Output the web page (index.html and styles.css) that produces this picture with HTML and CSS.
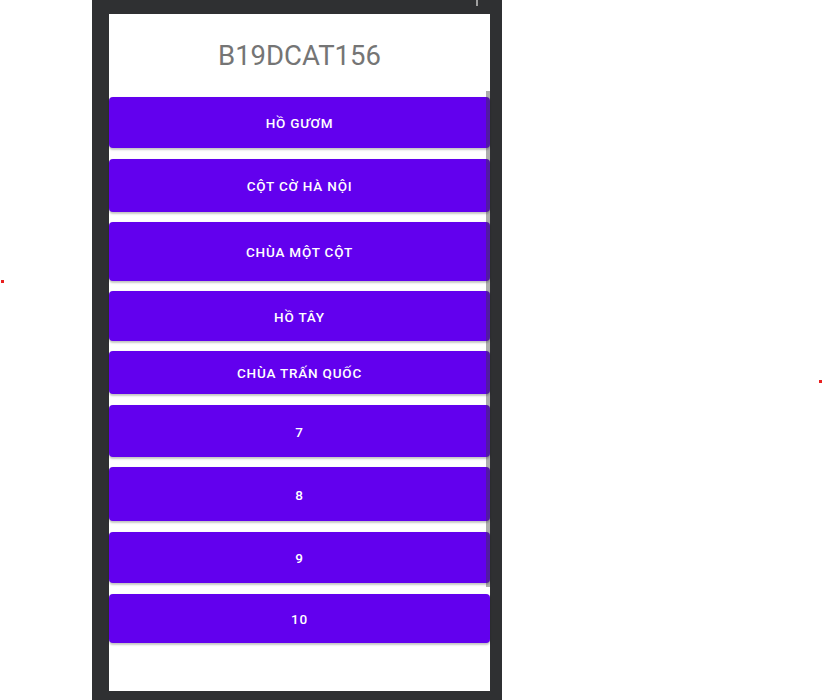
FILE: index.html
```html
<!DOCTYPE html>
<html lang="vi">
<head>
<meta charset="utf-8">
<title>B19DCAT156</title>
<link rel="stylesheet" href="styles.css">
</head>
<body>
<div class="page">
  <span class="dot dot-left"></span>
  <div class="device">
    <span class="tick"></span>
    <div class="screen">
      <h1 class="title">B19DCAT156</h1>
      <div class="list">
        <button class="btn b1">Hồ Gươm</button>
        <button class="btn b2">Cột cờ Hà Nội</button>
        <button class="btn b3">Chùa Một Cột</button>
        <button class="btn b4">Hồ Tây</button>
        <button class="btn b5">Chùa Trấn Quốc</button>
        <button class="btn b6">7</button>
        <button class="btn b7">8</button>
        <button class="btn b8">9</button>
        <button class="btn b9">10</button>
      </div>
      <span class="scrollbar"></span>
    </div>
  </div>
  <span class="dot dot-right"></span>
</div>
</body>
</html>
```
FILE: styles.css
```css
html, body {
  margin: 0;
  padding: 0;
  background: #ffffff;
}
.page {
  position: relative;
  width: 823px;
  height: 700px;
  overflow: hidden;
}
.dot {
  position: absolute;
  width: 3px;
  height: 3px;
  background: #e82020;
}
.dot-left { left: 1px; top: 280px; }
.dot-right { left: 819px; top: 380px; }
.device {
  position: relative;
  margin-left: 92px;
  width: 410px;
  height: 700px;
  background: #2f3032;
  padding-top: 14px;
  box-sizing: border-box;
}
.tick {
  position: absolute;
  left: 384px;
  top: 0;
  width: 2px;
  height: 6px;
  background: #a0a0a0;
}
.screen {
  position: relative;
  margin-left: 17px;
  width: 381px;
  height: 677px;
  background: #ffffff;
  display: flex;
  flex-direction: column;
}
.title {
  margin: 0;
  height: 83px;
  display: flex;
  align-items: center;
  justify-content: center;
  font-family: Roboto, "Liberation Sans", sans-serif;
  font-weight: 400;
  font-size: 27.5px;
  color: #757575;
  padding-bottom: 1px;
  box-sizing: border-box;
}
.list {
  display: flex;
  flex-direction: column;
  gap: 10px;
}
.btn {
  display: flex;
  align-items: center;
  justify-content: center;
  width: 100%;
  border: 0;
  margin: 0;
  padding: 1px 0 0 0;
  border-radius: 4px;
  background: #6200ee;
  color: #ffffff;
  font-family: Roboto, "Liberation Sans", sans-serif;
  font-weight: 500;
  font-size: 13.5px;
  letter-spacing: 0.8px;
  text-transform: uppercase;
  box-shadow: 0 2px 2px rgba(0, 0, 0, 0.22), 0 0 1px rgba(0, 0, 0, 0.12);
}
.b1 { height: 51px; }
.b2 { height: 53px; margin-top: 1px; }
.b3 { height: 59px; }
.b4 { height: 50px; }
.b5 { height: 43px; }
.b6 { height: 52px; margin-top: 1px; }
.b7 { height: 54px; }
.b8 { height: 51px; margin-top: 1px; }
.b9 { height: 49px; margin-top: 1px; }
.scrollbar {
  position: absolute;
  left: 377px;
  top: 77px;
  width: 4px;
  height: 496px;
  background: rgba(60, 60, 60, 0.42);
}
```
